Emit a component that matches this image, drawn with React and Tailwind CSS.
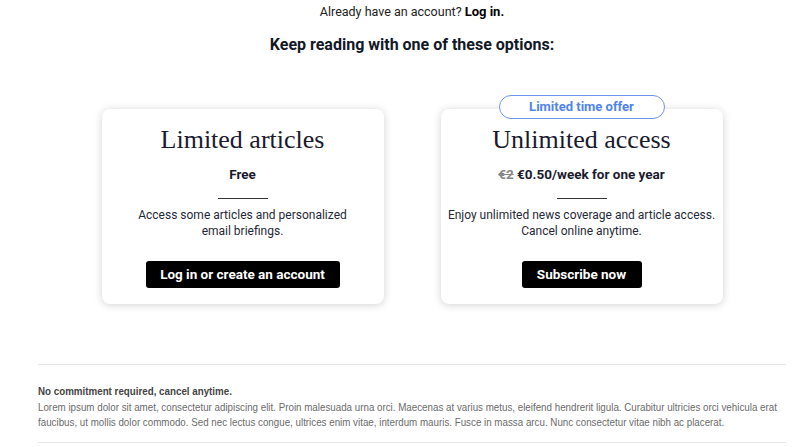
export default function App() {
  const sans = "font-['Roboto','Liberation_Sans',sans-serif]";
  return (
    <div className="w-[824px] h-[447px] overflow-hidden bg-white">
      <div className={`w-[824px] ${sans} text-[#1a1a2e]`}>
        <p className="text-center text-[12.5px] leading-none pt-[5px] text-[#222]">
          Already have an account? <span className="font-bold text-black text-[13px]">Log in.</span>
        </p>
        <h2 className="text-center text-[16px] font-bold leading-none mt-[18px] text-[#111827]">
          Keep reading with one of these options:
        </h2>

        <div className="flex justify-center gap-[57px] mt-[56px]">
          <div className="w-[282px] h-[195px] rounded-lg bg-white shadow-[0_1px_8px_rgba(0,0,0,0.18)] flex flex-col items-center pt-[18px]">
            <h3 className="font-['Liberation_Serif',serif] text-[26px] leading-none text-[#1a1a2e]">Limited articles</h3>
            <p className="mt-[15px] text-[13.5px] font-bold leading-none">Free</p>
            <div className="w-[50px] h-px bg-[#333] mt-[17px]" />
            <p className="mt-[8px] text-[12px] leading-[16px] text-center text-[#1f2937] whitespace-nowrap">
              Access some articles and personalized<br />email briefings.
            </p>
            <button className="mt-[22px] w-[194px] h-[27px] rounded-[3px] bg-black text-white text-[13.5px] font-bold">
              Log in or create an account
            </button>
          </div>

          <div className="relative w-[282px] h-[195px] rounded-lg bg-white shadow-[0_1px_8px_rgba(0,0,0,0.18)] flex flex-col items-center pt-[18px]">
            <div className="absolute -top-[14px] left-1/2 -translate-x-1/2 w-[166px] h-[24px] rounded-full border border-[#6b95ee] bg-white flex items-center justify-center text-[13px] font-bold text-[#4f84ec]">
              Limited time offer
            </div>
            <h3 className="font-['Liberation_Serif',serif] text-[26px] leading-none text-[#1a1a2e]">Unlimited access</h3>
            <p className="mt-[15px] text-[13.5px] font-bold leading-none">
              <span className="line-through text-[#888]">€2</span> €0.50/week for one year
            </p>
            <div className="w-[50px] h-px bg-[#333] mt-[17px]" />
            <p className="mt-[8px] text-[12px] leading-[16px] text-center text-[#1f2937] whitespace-nowrap">
              Enjoy unlimited news coverage and article access.<br />Cancel online anytime.
            </p>
            <button className="mt-[22px] w-[120px] h-[27px] rounded-[3px] bg-black text-white text-[13.5px] font-bold">
              Subscribe now
            </button>
          </div>
        </div>

        <div className="mx-[38px] mt-[60px] border-t border-b border-[#e5e5e5] h-[79px] pt-[19px] overflow-hidden">
          <div className="w-[879px] origin-left scale-x-[0.85] font-['Liberation_Sans',sans-serif] text-[11.5px] text-[#6b6b6b]">
            <p className="font-bold text-[#444] leading-[14px]">No commitment required, cancel anytime.</p>
            <p className="leading-[15px] mt-[2px]">
              Lorem ipsum dolor sit amet, consectetur adipiscing elit. Proin malesuada urna orci. Maecenas at varius metus, eleifend hendrerit ligula. Curabitur ultricies orci vehicula erat faucibus, ut mollis dolor commodo. Sed nec lectus congue, ultrices enim vitae, interdum mauris. Fusce in massa arcu. Nunc consectetur vitae nibh ac placerat.
            </p>
          </div>
        </div>
      </div>
    </div>
  );
}
